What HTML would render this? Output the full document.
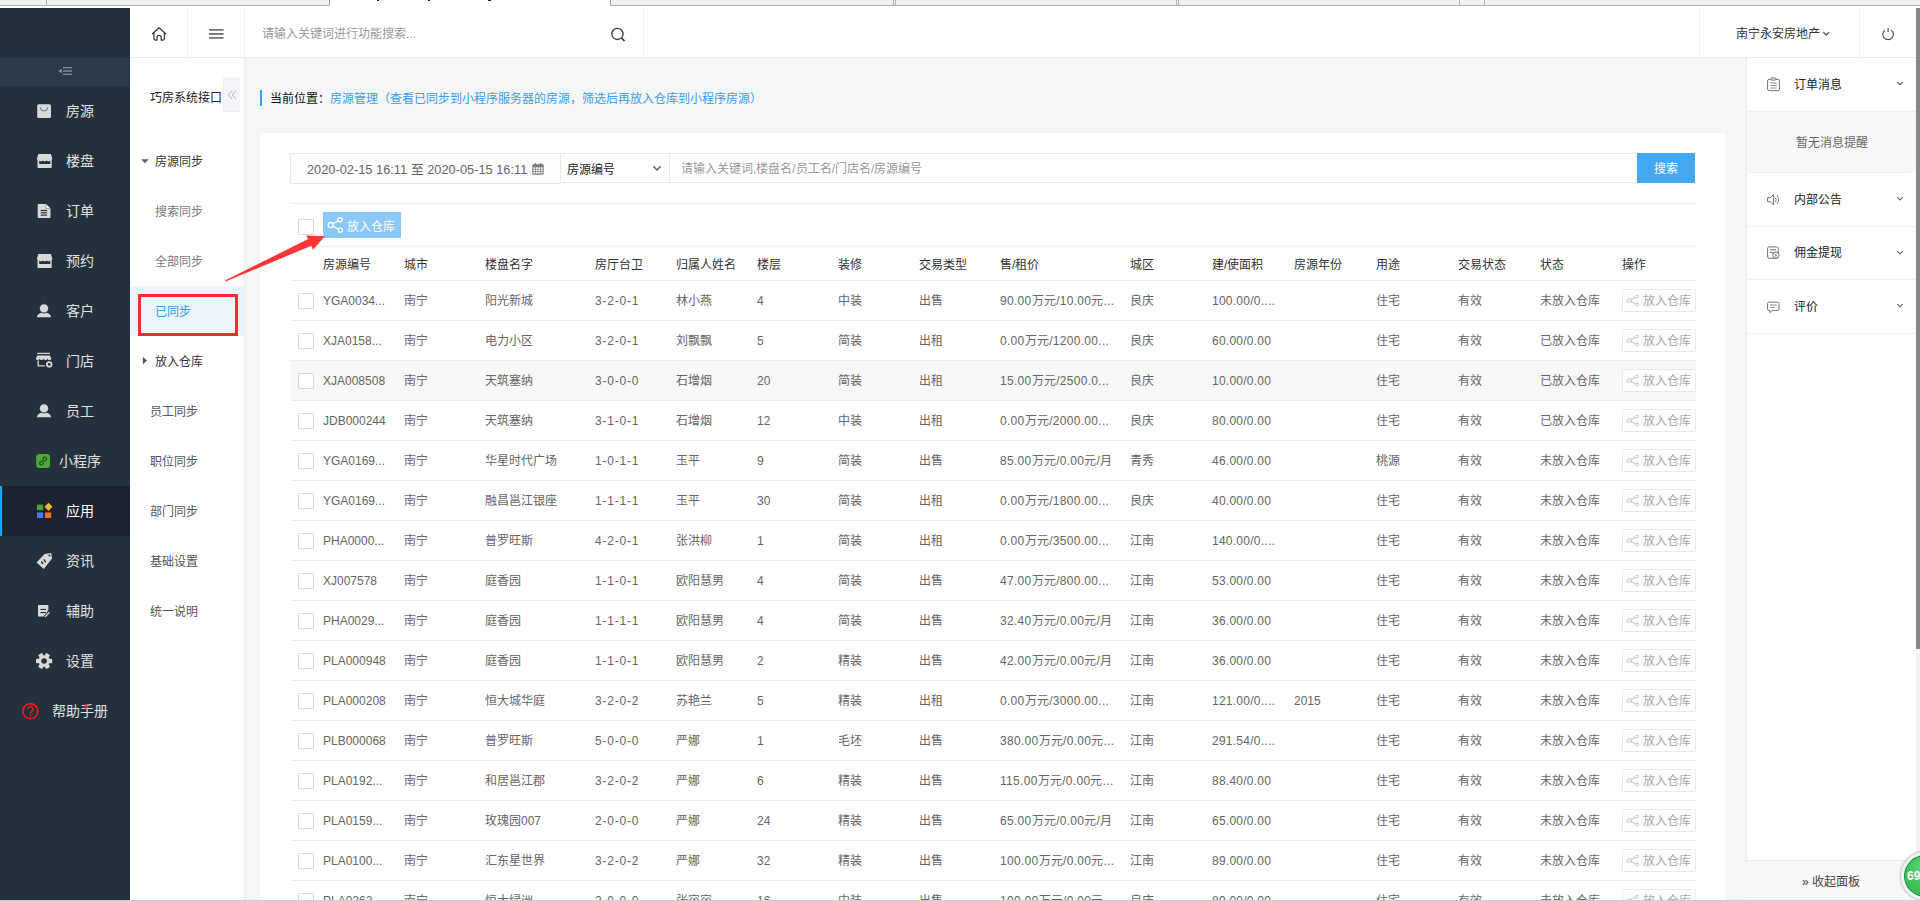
<!DOCTYPE html>
<html lang="zh-CN">
<head>
<meta charset="utf-8">
<title>房源管理</title>
<style>
*{box-sizing:border-box;margin:0;padding:0}
html,body{width:1920px;height:901px;overflow:hidden;background:#fff}
body{position:relative;font-family:"Liberation Sans",sans-serif;font-size:12px;color:#333;line-height:1}
i{font-style:normal}
.abs{position:absolute}
svg{display:block;position:absolute;overflow:visible}

/* browser tab strip remnant */
#tabs{position:absolute;left:0;top:0;width:1920px;height:6px;background:#f1f1f1;border-bottom:1px solid #b2b2b2}
#tabs i{position:absolute;top:0;height:5px;width:1px;background:#b0b0b0}
#tabs .act{position:absolute;left:330px;top:0;width:280px;height:6px;background:#fff}
#tabs b{position:absolute;top:0;height:1px;background:#1a1a2a}

/* left dark nav */
#nav{position:absolute;left:0;top:8px;width:130px;height:893px;background:#25303d}
#nav .fold{position:absolute;left:0;top:50px;width:130px;height:28px;background:#2a3a4b}
#nav .it{position:absolute;left:0;width:130px;height:50px;color:#e2e2e2;font-size:14px;line-height:50px;white-space:nowrap}
#nav .it span{position:absolute;left:66px;top:0}
#nav .it.on{background:#1b2230;color:#fff;border-left:2px solid #00b2ff}
#nav .it.on span{left:64px}

/* header */
#hd{position:absolute;left:130px;top:8px;width:1786px;height:50px;background:#fff;border-bottom:1px solid #ebebeb}
#hd .sep{position:absolute;top:0;width:1px;height:49px;background:#efefef}
#hd .ph{position:absolute;left:132px;top:1px;line-height:50px;color:#999;font-size:12px;white-space:nowrap}
#hd .usr{position:absolute;left:1606px;top:1px;line-height:50px;color:#333;font-size:12px;white-space:nowrap}

/* sub nav */
#sub{position:absolute;left:130px;top:58px;width:115px;height:843px;background:#fff;border-right:1px solid #ececec}
#sub .tt{position:absolute;left:20px;top:15px;line-height:50px;color:#222;white-space:nowrap}
#sub .fd{position:absolute;left:93px;top:20px;width:17px;height:34px;background:#f3f5f8;border:1px solid #ebedf0;border-right:0}
#sub .it{position:absolute;left:0;width:114px;height:50px;line-height:50px;white-space:nowrap;color:#555}
#sub .it span{position:absolute;left:20px;top:1px}
#sub .it.p span{left:25px;color:#333}
#sub .it.c span{left:25px;color:#7a7a7a}
#sub .it.on{background:#edf4fc}
#sub .it.on span{left:25px;color:#2b9cf1}
#sub .tri{position:absolute;width:0;height:0}

/* content */
#main{position:absolute;left:245px;top:58px;width:1501px;height:843px;background:#f5f6f8;overflow:hidden}
#crumb{position:absolute;left:15px;top:33px;height:16px;padding-left:10px;line-height:16px;white-space:nowrap;color:#111}
#crumb em{font-style:normal;color:#3a9df0}
#card{position:absolute;left:15px;top:75px;width:1466px;height:780px;background:#fff}
#in{position:absolute;left:31px;top:0;width:1405px;height:780px}
.date{position:absolute;left:-1px;top:20px;width:271px;height:31px;border:1px solid #e6e6e6;background:#fdfdfd;border-radius:2px;line-height:29px;color:#666;white-space:nowrap}
.date span{position:absolute;left:16px;top:1px;font-size:12.8px}
.sel{position:absolute;left:269px;top:20px;width:110px;height:30px;border:1px solid #e8e8e8;line-height:29px;color:#222;white-space:nowrap}
.sel span{position:absolute;left:6px;top:2px}
.kw{position:absolute;left:378px;top:20px;width:969px;height:30px;border:1px solid #e8e8e8;line-height:29px;color:#999;white-space:nowrap}
.kw span{position:absolute;left:11px;top:1px}
.sbtn{position:absolute;left:1346px;top:20px;width:58px;height:30px;background:#44a8f5;color:#fff;line-height:33px;text-align:center}
.hr{position:absolute;left:-1px;width:1406px;height:1px;background:#ececec}
.cb{position:absolute;left:7px;width:16px;height:16px;border:1px solid #d6d6d6;background:#fff;border-radius:1px}
.pbtn{position:absolute;left:32px;top:79px;width:78px;height:26px;background:#8bc8f8;color:#fff;line-height:26px;white-space:nowrap}
.pbtn span{position:absolute;left:24px;top:2px}
.th{position:absolute;top:115px;line-height:35px;color:#333;white-space:nowrap}
.tr{position:absolute;left:0;width:1405px;height:40px;border-bottom:1px solid #ececec}
.tr::before{content:"";position:absolute;left:-1px;top:0;width:1px;height:39px;background:inherit;border-bottom:1px solid #ececec}
.tr.hov{background:#f8f8f8}
.tr .cb{top:12px}
.td{position:absolute;top:1px;line-height:39px;color:#666;white-space:nowrap}
.op{position:absolute;left:1331px;top:8px;width:74px;height:23px;border:1px solid #e9e9e9;border-radius:2px;background:#fff;color:#a8a8a8;line-height:23px;white-space:nowrap;padding-left:20px}
.sh{left:-1px;top:-1px;width:22px;height:22px;fill:none;stroke:#c2c2c2;stroke-width:1}
.pbtn .sh{left:0;top:0;width:26px;height:26px;stroke:#fff;stroke-width:1.3}
.c0{left:32px}
.c1{left:113px}
.c2{left:194px}
.c3{left:304px}
.c4{left:385px}
.c5{left:466px}
.c6{left:547px}
.c7{left:628px}
.c8{left:709px}
.c9{left:839px}
.c10{left:921px}
.c11{left:1003px}
.c12{left:1085px}
.c13{left:1167px}
.c14{left:1249px}
.c15{left:1331px}
.td.c3{letter-spacing:.8px}
.td.c8{letter-spacing:.3px}
.td.c10{letter-spacing:.25px}

/* right panel */
#rp{position:absolute;left:1746px;top:58px;width:170px;height:843px;background:#fff;border-left:1px solid #ebebeb}
#rp .it{position:absolute;left:0;width:169px;height:54px;line-height:53px;border-bottom:1px solid #f0f0f0;color:#222;white-space:nowrap}
#rp .it span{position:absolute;left:47px;top:1px}
#rp .msg{position:absolute;left:0;top:54px;width:169px;padding-left:1px;height:61px;background:#f8f8f8;border-bottom:1px solid #efefef;border-radius:0 0 5px 5px;line-height:63px;color:#666;text-align:center}
#rp .ft{position:absolute;left:-1px;top:802px;width:170px;padding-left:2px;height:41px;background:#f8f8f8;border-top:1px solid #ececec;line-height:42px;color:#444;text-align:center;padding-right:2px}

#sbar{position:absolute;left:1916px;top:8px;width:4px;height:893px;background:#f4f4f4}
#sbar i{position:absolute;left:0;top:0;width:4px;height:641px;background:#878787}
#ball{position:absolute;left:1901px;top:852px;width:48px;height:48px;border-radius:50%;background:radial-gradient(circle at 50% 30%,#62d977 0,#41c45c 45%,#33b54e 100%);border:3px solid #f2f2f2;box-shadow:0 0 3px rgba(0,0,0,.5), inset 0 0 0 1px #178a36;color:#fff;font-weight:bold;font-size:12px;line-height:42px;padding-left:3px}
#btm{position:absolute;left:0;top:900px;width:1920px;height:1px;background:#cbcbcb}
</style>
</head>
<body>

<div id="tabs">
  <div class="act"></div>
  <i style="left:46px"></i>
  <i style="left:329px;background:#999"></i><i style="left:328px;background:#fafafa"></i>
  <i style="left:610px;background:#999"></i><i style="left:611px;background:#fafafa"></i>
  <i style="left:893px"></i><i style="left:895px"></i><i style="left:1176px"></i><i style="left:1178px"></i><i style="left:1459px"></i><i style="left:1484px"></i>
  <b style="left:377px;width:2px"></b><b style="left:428px;width:2px"></b><b style="left:488px;width:3px"></b>
</div>

<div id="nav">
  <div class="fold"></div>
  <div class="it" style="top:78px"><span>房源</span></div>
  <div class="it" style="top:128px"><span>楼盘</span></div>
  <div class="it" style="top:178px"><span>订单</span></div>
  <div class="it" style="top:228px"><span>预约</span></div>
  <div class="it" style="top:278px"><span>客户</span></div>
  <div class="it" style="top:328px"><span>门店</span></div>
  <div class="it" style="top:378px"><span>员工</span></div>
  <div class="it" style="top:428px"><span style="left:59px">小程序</span></div>
  <div class="it on" style="top:478px"><span>应用</span></div>
  <div class="it" style="top:528px"><span>资讯</span></div>
  <div class="it" style="top:578px"><span>辅助</span></div>
  <div class="it" style="top:628px"><span>设置</span></div>
  <div class="it" style="top:678px"><span style="left:52px">帮助手册</span></div>
</div>

<div id="hd">
  <div class="sep" style="left:57px"></div>
  <div class="sep" style="left:114px"></div>
  <div class="sep" style="left:513px"></div>
  <div class="sep" style="left:1569px"></div>
  <div class="sep" style="left:1729px"></div>
  <div class="ph">请输入关键词进行功能搜索...</div>
  <div class="usr">南宁永安房地产</div>
</div>

<div id="sub">
  <div class="tt">巧房系统接口</div>
  <div class="fd"></div>
  <div class="it p" style="top:78px"><span>房源同步</span></div>
  <div class="it c" style="top:128px"><span>搜索同步</span></div>
  <div class="it c" style="top:178px"><span>全部同步</span></div>
  <div class="it on" style="top:228px"><span>已同步</span></div>
  <div class="it p" style="top:278px"><span>放入仓库</span></div>
  <div class="it" style="top:328px"><span>员工同步</span></div>
  <div class="it" style="top:378px"><span>职位同步</span></div>
  <div class="it" style="top:428px"><span>部门同步</span></div>
  <div class="it" style="top:478px"><span>基础设置</span></div>
  <div class="it" style="top:528px"><span>统一说明</span></div>
</div>

<div id="main">
  <div style="position:absolute;left:15px;top:32px;width:2px;height:16px;background:#3b9ff3"></div>
  <div id="crumb">当前位置：<em>房源管理（查看已同步到小程序服务器的房源，筛选后再放入仓库到小程序房源）</em></div>
  <div id="card">
    <div id="in">
      <div class="date"><span>2020-02-15 16:11 至 2020-05-15 16:11</span></div>
      <div class="sel"><span>房源编号</span></div>
      <div class="kw"><span>请输入关键词,楼盘名/员工名/门店名/房源编号</span></div>
      <div class="sbtn">搜索</div>
      <div class="hr" style="top:70px"></div>
      <i class="cb" style="top:86px"></i>
      <div class="pbtn"><svg class="sh" viewBox="0 0 26 26"><circle cx="7.7" cy="13" r="2.5"/><circle cx="17" cy="7.8" r="2.1"/><circle cx="17.4" cy="18.3" r="2.1"/><path d="M9.9 11.8l5.2-3M9.9 14.2l5.6 3.1"/></svg><span>放入仓库</span></div>
      <div class="hr" style="top:113px"></div>
      <span class="th c0">房源编号</span><span class="th c1">城市</span><span class="th c2">楼盘名字</span><span class="th c3">房厅台卫</span><span class="th c4">归属人姓名</span><span class="th c5">楼层</span><span class="th c6">装修</span><span class="th c7">交易类型</span><span class="th c8">售/租价</span><span class="th c9">城区</span><span class="th c10">建/使面积</span><span class="th c11">房源年份</span><span class="th c12">用途</span><span class="th c13">交易状态</span><span class="th c14">状态</span><span class="th c15">操作</span>
      <div class="hr" style="top:147px"></div>
      <div id="rows" style="position:absolute;left:0;top:-133px;width:1405px;height:0">
<div class="tr" style="top:281px"><i class="cb"></i><span class="td c0">YGA0034...</span><span class="td c1">南宁</span><span class="td c2">阳光新城</span><span class="td c3">3-2-0-1</span><span class="td c4">林小燕</span><span class="td c5">4</span><span class="td c6">中装</span><span class="td c7">出售</span><span class="td c8">90.00万元/10.00元...</span><span class="td c9">良庆</span><span class="td c10">100.00/0....</span><span class="td c12">住宅</span><span class="td c13">有效</span><span class="td c14">未放入仓库</span><span class="op"><svg class="sh" viewBox="0 0 22 22"><circle cx="7.1" cy="11.4" r="1.8"/><circle cx="14.7" cy="7.7" r="1.6"/><circle cx="14.9" cy="15.4" r="1.6"/><path d="M8.7 10.6l4.5-2.2M8.7 12.2l4.7 2.5"/></svg>放入仓库</span></div>
<div class="tr" style="top:321px"><i class="cb"></i><span class="td c0">XJA0158...</span><span class="td c1">南宁</span><span class="td c2">电力小区</span><span class="td c3">3-2-0-1</span><span class="td c4">刘飘飘</span><span class="td c5">5</span><span class="td c6">简装</span><span class="td c7">出租</span><span class="td c8">0.00万元/1200.00...</span><span class="td c9">良庆</span><span class="td c10">60.00/0.00</span><span class="td c12">住宅</span><span class="td c13">有效</span><span class="td c14">已放入仓库</span><span class="op"><svg class="sh" viewBox="0 0 22 22"><circle cx="7.1" cy="11.4" r="1.8"/><circle cx="14.7" cy="7.7" r="1.6"/><circle cx="14.9" cy="15.4" r="1.6"/><path d="M8.7 10.6l4.5-2.2M8.7 12.2l4.7 2.5"/></svg>放入仓库</span></div>
<div class="tr hov" style="top:361px"><i class="cb"></i><span class="td c0">XJA008508</span><span class="td c1">南宁</span><span class="td c2">天筑塞纳</span><span class="td c3">3-0-0-0</span><span class="td c4">石增烟</span><span class="td c5">20</span><span class="td c6">简装</span><span class="td c7">出租</span><span class="td c8">15.00万元/2500.0...</span><span class="td c9">良庆</span><span class="td c10">10.00/0.00</span><span class="td c12">住宅</span><span class="td c13">有效</span><span class="td c14">已放入仓库</span><span class="op"><svg class="sh" viewBox="0 0 22 22"><circle cx="7.1" cy="11.4" r="1.8"/><circle cx="14.7" cy="7.7" r="1.6"/><circle cx="14.9" cy="15.4" r="1.6"/><path d="M8.7 10.6l4.5-2.2M8.7 12.2l4.7 2.5"/></svg>放入仓库</span></div>
<div class="tr" style="top:401px"><i class="cb"></i><span class="td c0">JDB000244</span><span class="td c1">南宁</span><span class="td c2">天筑塞纳</span><span class="td c3">3-1-0-1</span><span class="td c4">石增烟</span><span class="td c5">12</span><span class="td c6">中装</span><span class="td c7">出租</span><span class="td c8">0.00万元/2000.00...</span><span class="td c9">良庆</span><span class="td c10">80.00/0.00</span><span class="td c12">住宅</span><span class="td c13">有效</span><span class="td c14">已放入仓库</span><span class="op"><svg class="sh" viewBox="0 0 22 22"><circle cx="7.1" cy="11.4" r="1.8"/><circle cx="14.7" cy="7.7" r="1.6"/><circle cx="14.9" cy="15.4" r="1.6"/><path d="M8.7 10.6l4.5-2.2M8.7 12.2l4.7 2.5"/></svg>放入仓库</span></div>
<div class="tr" style="top:441px"><i class="cb"></i><span class="td c0">YGA0169...</span><span class="td c1">南宁</span><span class="td c2">华星时代广场</span><span class="td c3">1-0-1-1</span><span class="td c4">玉平</span><span class="td c5">9</span><span class="td c6">简装</span><span class="td c7">出售</span><span class="td c8">85.00万元/0.00元/月</span><span class="td c9">青秀</span><span class="td c10">46.00/0.00</span><span class="td c12">桃源</span><span class="td c13">有效</span><span class="td c14">未放入仓库</span><span class="op"><svg class="sh" viewBox="0 0 22 22"><circle cx="7.1" cy="11.4" r="1.8"/><circle cx="14.7" cy="7.7" r="1.6"/><circle cx="14.9" cy="15.4" r="1.6"/><path d="M8.7 10.6l4.5-2.2M8.7 12.2l4.7 2.5"/></svg>放入仓库</span></div>
<div class="tr" style="top:481px"><i class="cb"></i><span class="td c0">YGA0169...</span><span class="td c1">南宁</span><span class="td c2">融昌邕江银座</span><span class="td c3">1-1-1-1</span><span class="td c4">玉平</span><span class="td c5">30</span><span class="td c6">简装</span><span class="td c7">出租</span><span class="td c8">0.00万元/1800.00...</span><span class="td c9">良庆</span><span class="td c10">40.00/0.00</span><span class="td c12">住宅</span><span class="td c13">有效</span><span class="td c14">未放入仓库</span><span class="op"><svg class="sh" viewBox="0 0 22 22"><circle cx="7.1" cy="11.4" r="1.8"/><circle cx="14.7" cy="7.7" r="1.6"/><circle cx="14.9" cy="15.4" r="1.6"/><path d="M8.7 10.6l4.5-2.2M8.7 12.2l4.7 2.5"/></svg>放入仓库</span></div>
<div class="tr" style="top:521px"><i class="cb"></i><span class="td c0">PHA0000...</span><span class="td c1">南宁</span><span class="td c2">普罗旺斯</span><span class="td c3">4-2-0-1</span><span class="td c4">张洪柳</span><span class="td c5">1</span><span class="td c6">简装</span><span class="td c7">出租</span><span class="td c8">0.00万元/3500.00...</span><span class="td c9">江南</span><span class="td c10">140.00/0....</span><span class="td c12">住宅</span><span class="td c13">有效</span><span class="td c14">未放入仓库</span><span class="op"><svg class="sh" viewBox="0 0 22 22"><circle cx="7.1" cy="11.4" r="1.8"/><circle cx="14.7" cy="7.7" r="1.6"/><circle cx="14.9" cy="15.4" r="1.6"/><path d="M8.7 10.6l4.5-2.2M8.7 12.2l4.7 2.5"/></svg>放入仓库</span></div>
<div class="tr" style="top:561px"><i class="cb"></i><span class="td c0">XJ007578</span><span class="td c1">南宁</span><span class="td c2">庭香园</span><span class="td c3">1-1-0-1</span><span class="td c4">欧阳慧男</span><span class="td c5">4</span><span class="td c6">简装</span><span class="td c7">出售</span><span class="td c8">47.00万元/800.00...</span><span class="td c9">江南</span><span class="td c10">53.00/0.00</span><span class="td c12">住宅</span><span class="td c13">有效</span><span class="td c14">未放入仓库</span><span class="op"><svg class="sh" viewBox="0 0 22 22"><circle cx="7.1" cy="11.4" r="1.8"/><circle cx="14.7" cy="7.7" r="1.6"/><circle cx="14.9" cy="15.4" r="1.6"/><path d="M8.7 10.6l4.5-2.2M8.7 12.2l4.7 2.5"/></svg>放入仓库</span></div>
<div class="tr" style="top:601px"><i class="cb"></i><span class="td c0">PHA0029...</span><span class="td c1">南宁</span><span class="td c2">庭香园</span><span class="td c3">1-1-1-1</span><span class="td c4">欧阳慧男</span><span class="td c5">4</span><span class="td c6">简装</span><span class="td c7">出售</span><span class="td c8">32.40万元/0.00元/月</span><span class="td c9">江南</span><span class="td c10">36.00/0.00</span><span class="td c12">住宅</span><span class="td c13">有效</span><span class="td c14">未放入仓库</span><span class="op"><svg class="sh" viewBox="0 0 22 22"><circle cx="7.1" cy="11.4" r="1.8"/><circle cx="14.7" cy="7.7" r="1.6"/><circle cx="14.9" cy="15.4" r="1.6"/><path d="M8.7 10.6l4.5-2.2M8.7 12.2l4.7 2.5"/></svg>放入仓库</span></div>
<div class="tr" style="top:641px"><i class="cb"></i><span class="td c0">PLA000948</span><span class="td c1">南宁</span><span class="td c2">庭香园</span><span class="td c3">1-1-0-1</span><span class="td c4">欧阳慧男</span><span class="td c5">2</span><span class="td c6">精装</span><span class="td c7">出售</span><span class="td c8">42.00万元/0.00元/月</span><span class="td c9">江南</span><span class="td c10">36.00/0.00</span><span class="td c12">住宅</span><span class="td c13">有效</span><span class="td c14">未放入仓库</span><span class="op"><svg class="sh" viewBox="0 0 22 22"><circle cx="7.1" cy="11.4" r="1.8"/><circle cx="14.7" cy="7.7" r="1.6"/><circle cx="14.9" cy="15.4" r="1.6"/><path d="M8.7 10.6l4.5-2.2M8.7 12.2l4.7 2.5"/></svg>放入仓库</span></div>
<div class="tr" style="top:681px"><i class="cb"></i><span class="td c0">PLA000208</span><span class="td c1">南宁</span><span class="td c2">恒大城华庭</span><span class="td c3">3-2-0-2</span><span class="td c4">苏艳兰</span><span class="td c5">5</span><span class="td c6">精装</span><span class="td c7">出租</span><span class="td c8">0.00万元/3000.00...</span><span class="td c9">江南</span><span class="td c10">121.00/0....</span><span class="td c11">2015</span><span class="td c12">住宅</span><span class="td c13">有效</span><span class="td c14">未放入仓库</span><span class="op"><svg class="sh" viewBox="0 0 22 22"><circle cx="7.1" cy="11.4" r="1.8"/><circle cx="14.7" cy="7.7" r="1.6"/><circle cx="14.9" cy="15.4" r="1.6"/><path d="M8.7 10.6l4.5-2.2M8.7 12.2l4.7 2.5"/></svg>放入仓库</span></div>
<div class="tr" style="top:721px"><i class="cb"></i><span class="td c0">PLB000068</span><span class="td c1">南宁</span><span class="td c2">普罗旺斯</span><span class="td c3">5-0-0-0</span><span class="td c4">严娜</span><span class="td c5">1</span><span class="td c6">毛坯</span><span class="td c7">出售</span><span class="td c8">380.00万元/0.00元...</span><span class="td c9">江南</span><span class="td c10">291.54/0....</span><span class="td c12">住宅</span><span class="td c13">有效</span><span class="td c14">未放入仓库</span><span class="op"><svg class="sh" viewBox="0 0 22 22"><circle cx="7.1" cy="11.4" r="1.8"/><circle cx="14.7" cy="7.7" r="1.6"/><circle cx="14.9" cy="15.4" r="1.6"/><path d="M8.7 10.6l4.5-2.2M8.7 12.2l4.7 2.5"/></svg>放入仓库</span></div>
<div class="tr" style="top:761px"><i class="cb"></i><span class="td c0">PLA0192...</span><span class="td c1">南宁</span><span class="td c2">和居邕江郡</span><span class="td c3">3-2-0-2</span><span class="td c4">严娜</span><span class="td c5">6</span><span class="td c6">精装</span><span class="td c7">出售</span><span class="td c8">115.00万元/0.00元...</span><span class="td c9">江南</span><span class="td c10">88.40/0.00</span><span class="td c12">住宅</span><span class="td c13">有效</span><span class="td c14">未放入仓库</span><span class="op"><svg class="sh" viewBox="0 0 22 22"><circle cx="7.1" cy="11.4" r="1.8"/><circle cx="14.7" cy="7.7" r="1.6"/><circle cx="14.9" cy="15.4" r="1.6"/><path d="M8.7 10.6l4.5-2.2M8.7 12.2l4.7 2.5"/></svg>放入仓库</span></div>
<div class="tr" style="top:801px"><i class="cb"></i><span class="td c0">PLA0159...</span><span class="td c1">南宁</span><span class="td c2">玫瑰园007</span><span class="td c3">2-0-0-0</span><span class="td c4">严娜</span><span class="td c5">24</span><span class="td c6">精装</span><span class="td c7">出售</span><span class="td c8">65.00万元/0.00元/月</span><span class="td c9">江南</span><span class="td c10">65.00/0.00</span><span class="td c12">住宅</span><span class="td c13">有效</span><span class="td c14">未放入仓库</span><span class="op"><svg class="sh" viewBox="0 0 22 22"><circle cx="7.1" cy="11.4" r="1.8"/><circle cx="14.7" cy="7.7" r="1.6"/><circle cx="14.9" cy="15.4" r="1.6"/><path d="M8.7 10.6l4.5-2.2M8.7 12.2l4.7 2.5"/></svg>放入仓库</span></div>
<div class="tr" style="top:841px"><i class="cb"></i><span class="td c0">PLA0100...</span><span class="td c1">南宁</span><span class="td c2">汇东星世界</span><span class="td c3">3-2-0-2</span><span class="td c4">严娜</span><span class="td c5">32</span><span class="td c6">精装</span><span class="td c7">出售</span><span class="td c8">100.00万元/0.00元...</span><span class="td c9">江南</span><span class="td c10">89.00/0.00</span><span class="td c12">住宅</span><span class="td c13">有效</span><span class="td c14">未放入仓库</span><span class="op"><svg class="sh" viewBox="0 0 22 22"><circle cx="7.1" cy="11.4" r="1.8"/><circle cx="14.7" cy="7.7" r="1.6"/><circle cx="14.9" cy="15.4" r="1.6"/><path d="M8.7 10.6l4.5-2.2M8.7 12.2l4.7 2.5"/></svg>放入仓库</span></div>
<div class="tr" style="top:881px"><i class="cb"></i><span class="td c0">PLA0262...</span><span class="td c1">南宁</span><span class="td c2">恒大绿洲</span><span class="td c3">2-0-0-0</span><span class="td c4">张容容</span><span class="td c5">16</span><span class="td c6">中装</span><span class="td c7">出售</span><span class="td c8">100.00万元/0.00元...</span><span class="td c9">良庆</span><span class="td c10">89.00/0.00</span><span class="td c12">住宅</span><span class="td c13">有效</span><span class="td c14">未放入仓库</span><span class="op"><svg class="sh" viewBox="0 0 22 22"><circle cx="7.1" cy="11.4" r="1.8"/><circle cx="14.7" cy="7.7" r="1.6"/><circle cx="14.9" cy="15.4" r="1.6"/><path d="M8.7 10.6l4.5-2.2M8.7 12.2l4.7 2.5"/></svg>放入仓库</span></div>
      </div>
    </div>
  </div>
</div>

<div id="rp">
  <div class="it" style="top:0"><span>订单消息</span></div>
  <div class="msg">暂无消息提醒</div>
  <div class="it" style="top:115px"><span>内部公告</span></div>
  <div class="it" style="top:168px"><span>佣金提现</span></div>
  <div class="it" style="top:222px"><span>评价</span></div>
  <div class="ft">» 收起面板</div>
</div>

<svg id="ov" width="1920" height="901" viewBox="0 0 1920 901" style="left:0;top:0;pointer-events:none">
<!-- ===== left nav ===== -->
<g fill="#8b97a4">
  <path d="M58.2 71l3.6-2.3v4.6z"/>
  <rect x="63" y="67.1" width="9" height="1.2"/><rect x="63" y="70.4" width="9" height="1.3"/><rect x="63" y="73.7" width="9" height="1.2"/>
</g>
<!-- 房源 bag -->
<rect x="37.2" y="104.2" width="13.8" height="13.8" rx="1.6" fill="#d9d9d9"/>
<path d="M40.4 107.3a3.7 3.7 0 0 0 7.4 0" fill="none" stroke="#5d6875" stroke-width=".9"/>
<!-- 楼盘 / 预约 store -->
<g>
  <path d="M38.3 154h12.6l1.4 4.7v.7h-.6v7.8a.8.8 0 0 1-.8.8H38.3a.8.8 0 0 1-.8-.8v-7.8h-.6v-.7z" fill="#d9d9d9"/>
  <path d="M39.2 164.1v-3.6q1.85 1.7 3.7 0q1.85 1.7 3.7 0q1.85 1.7 3.7 0v3.6z" fill="#25303d"/>
</g>
<g transform="translate(0 100)">
  <path d="M38.3 154h12.6l1.4 4.7v.7h-.6v7.8a.8.8 0 0 1-.8.8H38.3a.8.8 0 0 1-.8-.8v-7.8h-.6v-.7z" fill="#d9d9d9"/>
  <path d="M39.2 164.1v-3.6q1.85 1.7 3.7 0q1.85 1.7 3.7 0q1.85 1.7 3.7 0v3.6z" fill="#25303d"/>
</g>
<!-- 订单 file -->
<path d="M38.5 204h7.4l4.6 4.6v8.6a.8.8 0 0 1-.8.8H38.5a.8.8 0 0 1-.8-.8v-12.4a.8.8 0 0 1 .8-.8z" fill="#d9d9d9"/>
<path d="M45.9 204v4.6h4.6" fill="#f4f4f4" stroke="#4a5562" stroke-width=".5"/>
<g fill="#25303d"><rect x="40.7" y="209.9" width="6.4" height="1.2"/><rect x="40.7" y="212.2" width="6.4" height="1.2"/><rect x="40.7" y="214.5" width="6.4" height="1.2"/></g>
<!-- 客户 / 员工 user -->
<g>
  <path d="M37 317.2c0-3 3.2-4.7 7-4.7s7 1.7 7 4.7z" fill="#d9d9d9"/>
  <circle cx="44" cy="308.4" r="4.6" fill="#d9d9d9" stroke="#25303d" stroke-width=".9"/>
</g>
<g transform="translate(0 100)">
  <path d="M37 317.2c0-3 3.2-4.7 7-4.7s7 1.7 7 4.7z" fill="#d9d9d9"/>
  <circle cx="44" cy="308.4" r="4.6" fill="#d9d9d9" stroke="#25303d" stroke-width=".9"/>
</g>
<!-- 门店 shop -->
<rect x="37.3" y="352.8" width="12.6" height="1.2" fill="#d9d9d9"/>
<path d="M37.3 355.4h12.6l1.4 3.2q-.2 1.5-1.9 1.5q-1.7 0-1.9-1.5q-.2 1.5-1.95 1.5q-1.7 0-1.95-1.5q-.2 1.5-1.95 1.5q-1.7 0-1.95-1.5q-.2 1.5-1.9 1.5q-1.7 0-1.9-1.5z" fill="#d9d9d9"/>
<path d="M38.2 360.6v5.3h6.6" fill="none" stroke="#d9d9d9" stroke-width="1.3"/>
<circle cx="49.2" cy="364.4" r="2.4" fill="none" stroke="#d9d9d9" stroke-width="1.9"/>
<circle cx="49.2" cy="364.4" r="3.9" fill="none" stroke="#25303d" stroke-width=".8"/>
<!-- 小程序 -->
<rect x="36.2" y="454" width="13.8" height="14" rx="3.2" fill="#4dab34"/>
<path d="M41.3 461.5a1.75 1.75 0 1 0 1.75 1.75V459a1.75 1.75 0 1 1 1.75 1.75" fill="none" stroke="#235a1e" stroke-width="1.35" stroke-linecap="round"/>
<!-- 应用 -->
<rect x="37" y="504.6" width="6.2" height="5.6" fill="#46a52f"/>
<rect x="37" y="512.4" width="6.2" height="5.6" fill="#3c7deb"/>
<rect x="45" y="512.4" width="6.2" height="5.6" fill="#f0720f"/>
<path d="M48.5 502.7l4 4.1-4 4.1-4-4.1z" fill="#f3b731"/>
<!-- 资讯 tag -->
<path d="M44.6 554l6.6-1 .8 5.5-8.2 10.5-7.3-6.5z" fill="#d9d9d9"/>
<circle cx="49.4" cy="555.6" r="1" fill="#25303d"/>
<path d="M41.3 561.5l1.8 2.6M43.8 559.4l2 2.9" stroke="#25303d" stroke-width="1.35" fill="none"/>
<!-- 辅助 -->
<path d="M38 605h10.4v5.4h-1v6H38z" fill="#d9d9d9"/>
<g fill="#25303d"><rect x="40.4" y="608.9" width="5.6" height="1.1"/><rect x="40.4" y="612" width="5.6" height="1.1"/></g>
<path d="M44.4 617.4l5.4-5.4" stroke="#25303d" stroke-width="3"/>
<path d="M44.8 617l4.8-4.8" stroke="#d9d9d9" stroke-width="1.3"/>
<!-- 设置 gear -->
<g transform="translate(44.1 661)" fill="#d9d9d9">
  <circle r="5.6"/>
  <rect x="-8.1" y="-2.3" width="16.2" height="4.6" rx=".8"/>
  <rect x="-8.1" y="-2.3" width="16.2" height="4.6" rx=".8" transform="rotate(60)"/>
  <rect x="-8.1" y="-2.3" width="16.2" height="4.6" rx=".8" transform="rotate(120)"/>
  <circle r="2.8" fill="#25303d"/>
</g>
<!-- 帮助 -->
<circle cx="30.4" cy="711.2" r="7.5" fill="none" stroke="#ff1717" stroke-width="1.5"/>
<path d="M27.9 709.3a2.5 2.5 0 1 1 3.7 2.2c-.9.5-1.2.9-1.2 2" fill="none" stroke="#ff1717" stroke-width="1.4"/>
<circle cx="30.4" cy="715.6" r=".9" fill="#ff1717"/>
<circle cx="86" cy="706.9" r="1.8" fill="#ff0d0d"/>

<!-- ===== header ===== -->
<g fill="none" stroke="#3a3a3a" stroke-width="1.25" stroke-linejoin="round" stroke-linecap="round">
  <path d="M152.5 33.8L159.1 27.7l6.7 6.1"/>
  <path d="M153.9 32.9v5.7a1.4 1.4 0 0 0 1.4 1.4H157v-2.6a2.1 2.1 0 0 1 4.2 0V40h1.8a1.4 1.4 0 0 0 1.4-1.4v-5.7"/>
</g>
<g fill="#6a6a6a"><rect x="209" y="29.1" width="14.6" height="1.6"/><rect x="209" y="33.1" width="14.6" height="1.7"/><rect x="209" y="37.1" width="14.6" height="1.6"/></g>
<circle cx="617.4" cy="33.9" r="5.6" fill="none" stroke="#333" stroke-width="1.3"/>
<path d="M621.5 38l3 3" stroke="#333" stroke-width="1.7" fill="none"/>
<path d="M1823.3 32.2l2.9 2.8 2.9-2.8" fill="none" stroke="#555" stroke-width="1.3"/>
<path d="M1884.9 30.1a5.3 5.3 0 1 0 6.4 0M1888.1 28.1v4" fill="none" stroke="#444a66" stroke-width="1.15"/>

<!-- ===== sub nav ===== -->
<path d="M232 90.7l-3.7 4.2 3.7 4.2M236 90.7l-3.7 4.2 3.7 4.2" fill="none" stroke="#a3b6ca" stroke-width="1"/>
<path d="M141 159.2h7.8l-3.9 4.1z" fill="#666"/>
<path d="M142.9 356.9l4.1 3.7-4.1 3.7z" fill="#555"/>
<rect x="139.5" y="295.5" width="97" height="39" fill="none" stroke="#ff2b2b" stroke-width="3"/>

<!-- ===== content ===== -->
<g>
  <rect x="532.3" y="164.2" width="11.4" height="10.5" rx="1" fill="#7c7c7c"/>
  <rect x="534.7" y="163" width="1.4" height="2.8" rx=".6" fill="#7c7c7c"/><rect x="539.9" y="163" width="1.4" height="2.8" rx=".6" fill="#7c7c7c"/>
  <g fill="#fff">
    <rect x="533.3" y="167.3" width="1.8" height="1.6"/><rect x="535.8" y="167.3" width="1.8" height="1.6"/><rect x="538.3" y="167.3" width="1.8" height="1.6"/><rect x="540.8" y="167.3" width="1.8" height="1.6"/>
    <rect x="533.3" y="169.6" width="1.8" height="1.6"/><rect x="535.8" y="169.6" width="1.8" height="1.6"/><rect x="538.3" y="169.6" width="1.8" height="1.6"/><rect x="540.8" y="169.6" width="1.8" height="1.6"/>
    <rect x="533.3" y="171.9" width="1.8" height="1.6"/><rect x="535.8" y="171.9" width="1.8" height="1.6"/><rect x="538.3" y="171.9" width="1.8" height="1.6"/><rect x="540.8" y="171.9" width="1.8" height="1.6"/>
  </g>
</g>
<path d="M653.4 166.3l3.6 3.7 3.6-3.7" fill="none" stroke="#555a66" stroke-width="1.4"/>

<!-- ===== right panel ===== -->
<g fill="none" stroke="#707070" stroke-width="1">
  <rect x="1767.6" y="79.3" width="11.8" height="11.4" rx="1.6"/>
  <rect x="1771.2" y="77.9" width="4.6" height="2.2" rx=".6" fill="#fff"/>
  <path d="M1770.4 83h6.4M1770.4 85.5h6.4M1770.4 88h6.4" stroke="#8a8a8a"/>
  <path d="M1767.6 197.7h2.5l3.5-3v10l-3.5-3h-2.5z" stroke-linejoin="round"/>
  <path d="M1775.2 197.6a2.9 2.9 0 0 1 0 4.2M1776.9 195.7a5.6 5.6 0 0 1 0 8"/>
  <rect x="1767.6" y="246.9" width="10.6" height="11.4" rx="1.6"/>
  <path d="M1769.8 249.8h6.2M1769.8 252.6h3"/>
  <circle cx="1775.9" cy="255.1" r="3.2" fill="#fff"/>
  <path d="M1774.7 253.6l1.2 1.5 1.2-1.5M1775.9 255.1v1.9M1774.8 255.7h2.2" stroke-width=".7"/>
  <path d="M1768.8 302.2h9a1.2 1.2 0 0 1 1.2 1.2v5.8a1.2 1.2 0 0 1-1.2 1.2h-5.6l-2.4 2.2v-2.2h-1a1.2 1.2 0 0 1-1.2-1.2v-5.8a1.2 1.2 0 0 1 1.2-1.2z" stroke-linejoin="round"/>
  <path d="M1770.2 305h6.2M1770.2 307.5h4.4" stroke="#8a8a8a"/>
</g>
<g fill="none" stroke="#666" stroke-width="1.2">
  <path d="M1897.4 82l2.7 2.7 2.7-2.7"/><path d="M1897.4 197.2l2.7 2.7 2.7-2.7"/><path d="M1897.4 251.2l2.7 2.7 2.7-2.7"/><path d="M1897.4 304.2l2.7 2.7 2.7-2.7"/>
</g>

<!-- ===== red arrow annotation ===== -->
<path d="M225 280.4L308.2 239.1l-2.1-3.7 18.8.85-12 13.55-1.5-4L225.7 281.4z" fill="#f93636"/>
</svg>

<div id="sbar"><i></i></div>
<div id="ball">69</div>
<div id="btm"></div>
</body>
</html>
